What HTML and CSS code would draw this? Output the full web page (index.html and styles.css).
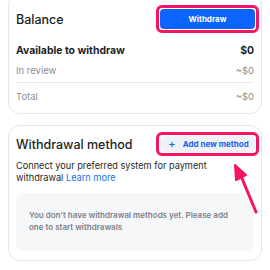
FILE: index.html
```html
<!DOCTYPE html>
<html>
<head>
<meta charset="utf-8">
<link rel="stylesheet" href="styles.css">
</head>
<body>
<div class="page">
  <section class="card balance">
    <div class="head">
      <h2 class="title">Balance</h2>
      <span class="hl"><button class="btn-primary">Withdraw</button></span>
    </div>
    <div class="row strong"><span>Available to withdraw</span><span>$0</span></div>
    <div class="row muted"><span>In review</span><span>~$0</span></div>
    <div class="divider"></div>
    <div class="row muted"><span>Total</span><span>~$0</span></div>
  </section>

  <section class="card method">
    <div class="head">
      <h2 class="title">Withdrawal method</h2>
      <span class="hl"><button class="btn-light"><span class="plus">+</span>Add new method</button></span>
    </div>
    <p class="desc"><span>Connect your preferred system for payment</span> <span>withdrawal</span> <a class="link">Learn more</a></p>
    <div class="empty">You don't have withdrawal methods yet. Please add one to start withdrawals</div>
  </section>

  <svg class="arrow" width="32" height="58" viewBox="0 0 32 58">
    <path d="M11 16 L26 52" stroke="#f5145e" stroke-width="3" stroke-linecap="round" fill="none"/>
    <path d="M5 5 L16 15 L6 20 Z" fill="#f5145e" stroke="#f5145e" stroke-width="2" stroke-linejoin="round"/>
  </svg>
</div>
</body>
</html>
```
FILE: styles.css
```css
* { box-sizing: border-box; }
html, body { margin: 0; padding: 0; background: #fff; }
body { font-family: Inter, "Noto Sans", sans-serif; color: #1d1f24; }
.page {
  position: relative;
  padding: 0 8px;
  margin-top: -7px;
  display: flex;
  flex-direction: column;
  gap: 11px;
}
.card {
  border: 1px solid #e4e6eb;
  border-radius: 12px;
  background: #fff;
  padding: 0 7px 0 7px;
}
.balance { padding-top: 11px; padding-bottom: 7px; }
.method { padding-top: 6px; padding-bottom: 9px; }
.head { display: flex; justify-content: space-between; align-items: center; }
.title { margin: 0; font-size: 12.5px; font-weight: 500; color: #1d1f24; }
.hl {
  display: inline-flex;
  border: 3px solid #f5145e;
  border-radius: 6px;
  padding: 1px;
  margin-right: -5px;
}
.btn-primary {
  width: 95px; height: 20px;
  border: 0; border-radius: 4px;
  background: #0a66ff; color: #fff;
  font-family: inherit; font-size: 8px; font-weight: 700;
  padding: 0;
}
.btn-light {
  width: 95px; height: 16px;
  border: 0; border-radius: 4px;
  background: #eef1f6; color: #1a62e8;
  font-family: inherit; font-size: 8px; font-weight: 700;
  display: flex; align-items: center; justify-content: center; gap: 7px;
  padding: 0 0 0 2px;
}
.plus { font-size: 11px; font-weight: 500; line-height: 1; }
.row { display: flex; justify-content: space-between; font-size: 9.5px; height: 20px; align-items: center; }
.balance .row.strong { margin-top: 7px; font-size: 10.4px; font-weight: 700; }
.row.muted { color: #8b8f98; }
.divider { height: 1px; background: #e6e8ec; margin: 2px 0 3px; }
.desc { margin: 4px 0 0; max-width: 222px; font-size: 9.2px; line-height: 12px; color: #1d1f24; }
.link { color: #1a6cf0; }
.empty {
  margin-top: 9px;
  background: #f6f7f9;
  border-radius: 8px;
  padding: 16px 20px 18px 13px;
  font-size: 8px; font-weight: 600; line-height: 12px;
  color: #7c8089;
}
.arrow { position: absolute; left: 230px; top: 167px; }
```
